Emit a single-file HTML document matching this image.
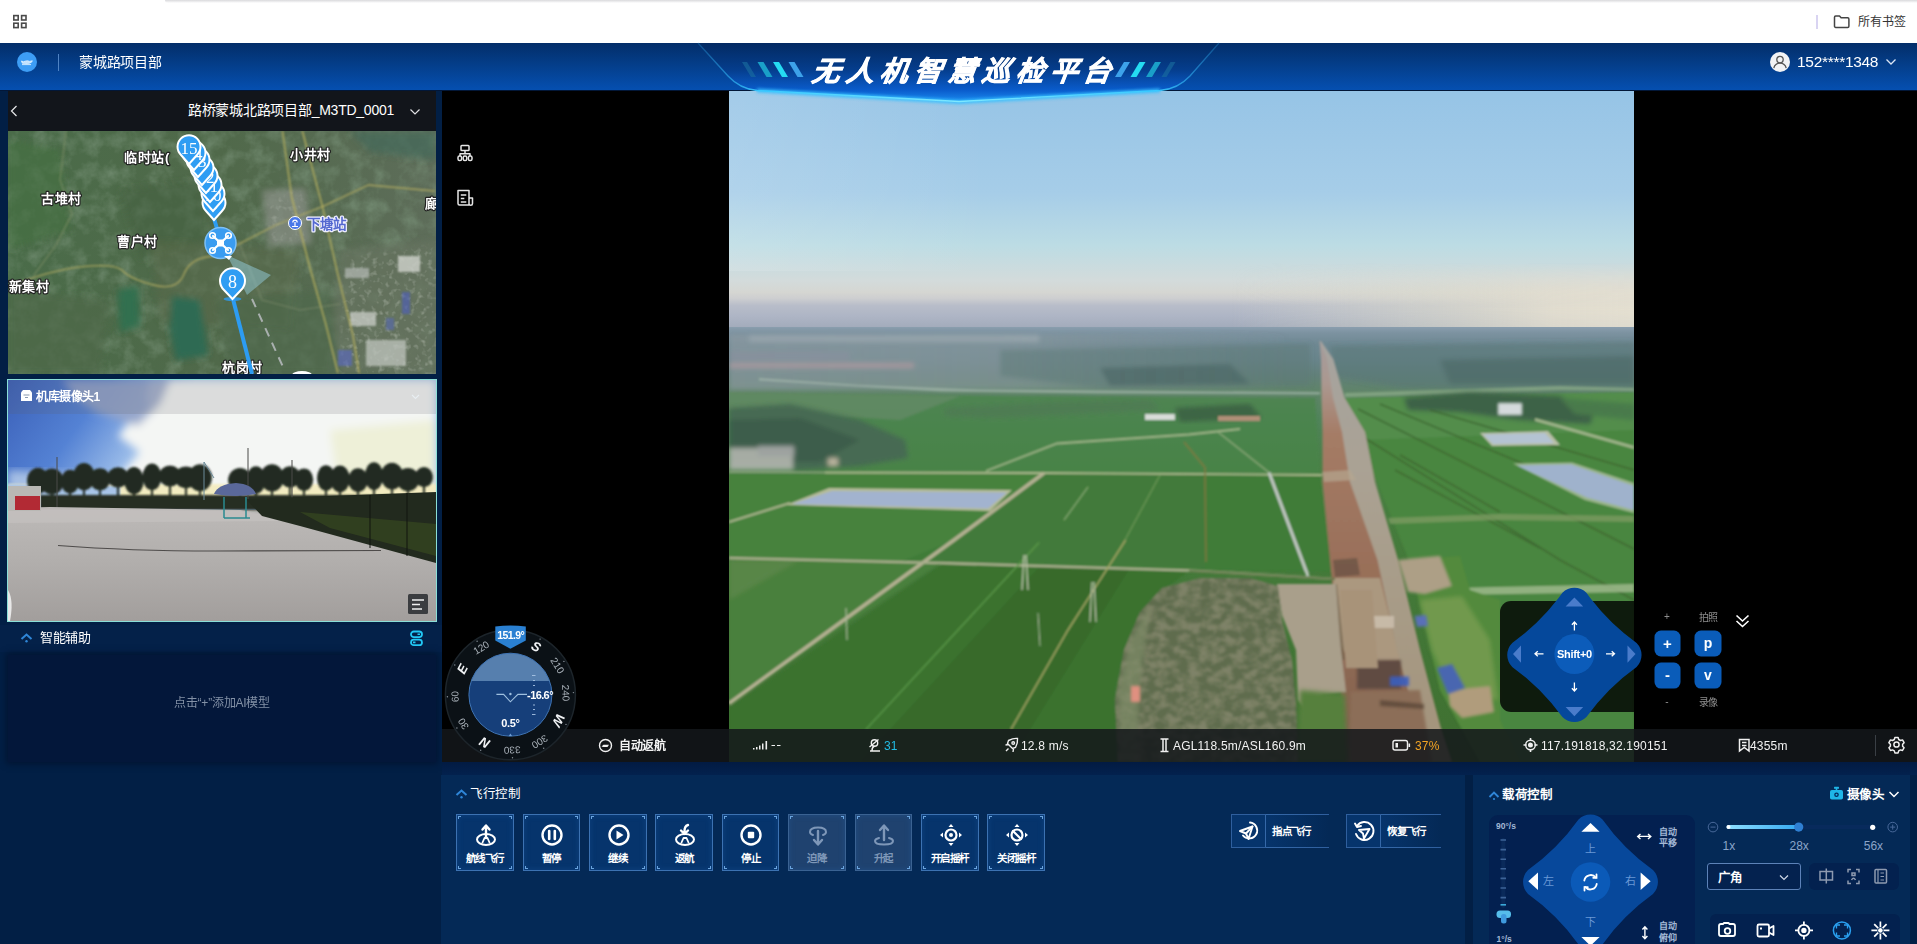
<!DOCTYPE html>
<html lang="zh-CN">
<head>
<meta charset="utf-8">
<title>无人机智慧巡检平台</title>
<style>
*{box-sizing:border-box;margin:0;padding:0}
html,body{width:1917px;height:944px;overflow:hidden;background:#021f45;font-family:"Liberation Sans",sans-serif;color:#fff}
.a{position:absolute}
svg{display:block;position:absolute;overflow:visible}
#bm{position:absolute;left:0;top:0;width:1917px;height:43px;background:#fff}
#hdr{position:absolute;left:0;top:43px;width:1917px;height:48px;background:linear-gradient(#032e69 0%,#043c86 40%,#0550b2 100%)}
#left{position:absolute;left:0;top:91px;width:442px;height:853px;background:#021f45}
#lhead{position:absolute;left:8px;top:0;width:428px;height:40px;background:#12151b}
#map{position:absolute;left:8px;top:40px;width:428px;height:243px;background:#4a6a4c;overflow:hidden}
#cam{position:absolute;left:7px;top:287px;width:430px;height:244px;border:1px solid #4ad6d0;overflow:hidden;background:#aaa}
#ai{position:absolute;left:8px;top:564px;width:428px;height:106px;background:#031634}
#main{position:absolute;left:442px;top:91px;width:1475px;height:671px;background:#000;overflow:hidden}
#photo{position:absolute;left:287px;top:0;width:905px;height:671px;overflow:hidden}
#status{position:absolute;left:0;top:638px;width:1475px;height:33px;background:rgba(22,24,28,.82)}
#fc{position:absolute;left:442px;top:775px;width:1023px;height:169px;background:#042a5d}
#pc{position:absolute;left:1473px;top:775px;width:437px;height:169px;background:#042a5d}
#hdr{z-index:5}
#hdr:after{content:"";position:absolute;left:0;top:47px;width:1917px;height:1px;background:#021738;z-index:-1}
#ttl{left:810px;top:10.5px;font-size:28px;line-height:36px;font-weight:900;font-style:italic;letter-spacing:5.9px;white-space:nowrap;color:#fff;-webkit-text-stroke:.7px #fff;transform:skewX(-8deg);transform-origin:0 100%}
#map{top:40px;height:243px;background:#4d684e}
#cam{left:7px;top:288px;width:430px;height:243px;border:1px solid #8adfd8;background:#b5b2b0}
#aih{position:absolute;left:0;top:534px;width:442px;height:27px;background:#042149}
#ai{top:564px;height:107px;background:#03173a;box-shadow:0 0 6px 2px rgba(2,20,48,.9)}
#status{background:rgba(20,23,27,.86)}
.st{position:absolute;top:9px;letter-spacing:.2px;font-size:12px;line-height:16px;white-space:nowrap;color:#f2f2f2}
#fc,#pc{top:775px;background:#042956;overflow:hidden}
#fc{left:441px;width:1024px}
.fb{position:absolute;top:39px;width:57.500px;height:56.500px;border:1px solid #3c72b2;background:#06346c;color:#fff;box-shadow:inset 0 0 6px rgba(40,110,190,.25)}
.fb span{position:absolute;left:-4px;right:-4px;top:36px;text-align:center;font-size:10.500px;line-height:14px;font-weight:bold;letter-spacing:-.5px;white-space:nowrap}
.fb i{position:absolute;width:3px;height:3px;border:0 solid #6aa4de}
.fb .c1{left:1px;top:1px;border-left-width:1px;border-top-width:1px}
.fb .c2{right:1px;top:1px;border-right-width:1px;border-top-width:1px}
.fb .c3{left:1px;bottom:1px;border-left-width:1px;border-bottom-width:1px}
.fb .c4{right:1px;bottom:1px;border-right-width:1px;border-bottom-width:1px}
.fb.dis{background:#1f426f;color:#7e97b8;border-color:#3a6292}
.pb{position:absolute;top:39px;height:34px;border:1px solid #2f5f9e;border-right:0;background:linear-gradient(90deg,#06346c 0,#06346c 35%,rgba(6,52,108,0) 100%)}
.pb:before{content:"";position:absolute;left:34px;right:0;top:-1px;height:1px;background:linear-gradient(90deg,#3568a8,rgba(53,104,168,0))}
.pb:after{content:"";position:absolute;left:34px;right:0;bottom:-1px;height:1px;background:linear-gradient(90deg,#3568a8,rgba(53,104,168,0))}
.pb b{position:absolute;left:33px;top:0;width:1px;height:32px;background:#3568a8}
.pb span{position:absolute;left:40px;top:9px;font-size:10.500px;line-height:14px;font-weight:bold;letter-spacing:-.4px;white-space:nowrap}

</style>
</head>
<body>
<div id="bm">
<div class="a" style="left:165px;top:0;width:1752px;height:3px;background:linear-gradient(#d9d9dc,#fff);border-radius:0 0 0 8px"></div>
<svg style="left:12px;top:14px" width="16" height="16" viewBox="0 0 16 16" fill="none" stroke="#4a4a4a" stroke-width="1.600"><rect x="1.800" y="1.600" width="4.400" height="4.400"/><rect x="9.600" y="1.600" width="4.400" height="4.400"/><rect x="1.800" y="9.200" width="4.400" height="4.400"/><rect x="9.600" y="9.200" width="4.400" height="4.400"/></svg>
<div class="a" style="left:1816px;top:15px;width:2px;height:14px;background:#d9d4f2"></div>
<svg style="left:1833px;top:14px" width="18" height="16" viewBox="0 0 18 16" fill="none" stroke="#444" stroke-width="1.500" stroke-linejoin="round"><path d="M1.500 3.200 a1.200 1.200 0 0 1 1.200 -1.200 h3.800 l1.600 1.800 h6.600 a1.200 1.200 0 0 1 1.200 1.200 v7.200 a1.200 1.200 0 0 1 -1.200 1.200 h-12 a1.200 1.200 0 0 1 -1.200 -1.200 z"/></svg>
<div class="a" style="left:1858px;top:14px;font-size:12px;line-height:16px;color:#333;white-space:nowrap">所有书签</div>
</div>
<div id="hdr">
<svg style="left:0;top:0" width="1917" height="64" viewBox="0 43 1917 64">
<defs>
<linearGradient id="hc" x1="0" y1="43" x2="0" y2="102" gradientUnits="userSpaceOnUse"><stop offset="0" stop-color="#032a62"/><stop offset=".45" stop-color="#053d8c"/><stop offset=".8" stop-color="#0a5ccc"/><stop offset="1" stop-color="#1c8cf0"/></linearGradient>
<linearGradient id="hl" x1="698" y1="0" x2="1219" y2="0" gradientUnits="userSpaceOnUse"><stop offset="0" stop-color="#2a9be0" stop-opacity=".3"/><stop offset=".12" stop-color="#38c8ff"/><stop offset=".5" stop-color="#7fe8ff"/><stop offset=".88" stop-color="#38c8ff"/><stop offset="1" stop-color="#2a9be0" stop-opacity=".3"/></linearGradient>
<filter id="hg" x="-5%" y="-50%" width="110%" height="200%"><feGaussianBlur stdDeviation="1.6"/></filter>
</defs>
<path d="M698 43 L1219 43 L1190 76 Q1178 89 1160 90.500 L959 102 L757 90.500 Q740 89 728 76Z" fill="url(#hc)"/>
<path d="M757 90.500 L959 102 L1160 90.500" stroke="#35c0ff" stroke-width="4" fill="none" filter="url(#hg)" opacity=".9"/>
<path d="M698 43 L728 76 Q740 89 757 90.500 L959 101.500 L1160 90.500 Q1178 89 1190 76 L1219 43" stroke="url(#hl)" stroke-width="1.300" fill="none"/>
<g>
<path d="M742 62 l5 0 l9 15 l-5 0z" fill="#1a6fa0" opacity=".6"/>
<path d="M757.500 62 l6 0 l9 15 l-6 0z" fill="#1aa0c8"/>
<path d="M773 62 l6 0 l9 15 l-6 0z" fill="#25dcf2"/>
<path d="M788.500 62 l6 0 l9 15 l-6 0z" fill="#3da2ea"/>
<path d="M1124 62 l6 0 l-9 15 l-6 0z" fill="#3da2ea"/>
<path d="M1139.500 62 l6 0 l-9 15 l-6 0z" fill="#25dcf2"/>
<path d="M1155 62 l6 0 l-9 15 l-6 0z" fill="#1aa0c8"/>
<path d="M1170.500 62 l5 0 l-9 15 l-5 0z" fill="#1a6fa0" opacity=".6"/>
</g>
</svg>
<div class="a" id="ttl">无人机智慧巡检平台</div>
<svg style="left:17px;top:9px" width="20" height="20" viewBox="0 0 20 20"><circle cx="10" cy="10" r="10" fill="#3d9df5"/><path d="M4.500 9 l2 .8 l1.600 -.6 q2.400 -.8 4.600 .2 l2.600 -.6 l-.8 1.400 q-1.600 1.200 -4.400 1.200 l-4.800 -.2 z M5 12.600 h9" stroke="#dff0ff" stroke-width=".9" fill="#dff0ff" fill-opacity=".8"/></svg>
<div class="a" style="left:58px;top:11px;width:1px;height:17px;background:#4f83c4"></div>
<div class="a" style="left:79px;top:10px;font-size:14px;line-height:18px;white-space:nowrap;letter-spacing:-.2px">蒙城路项目部</div>
<svg style="left:1769px;top:8px" width="22" height="22" viewBox="0 0 22 22"><circle cx="11" cy="11" r="10" fill="#f2f3f5"/><circle cx="11" cy="8.600" r="3.200" fill="none" stroke="#555" stroke-width="1.300"/><path d="M4.800 17.200 q1.200 -5 6.200 -5 q5 0 6.200 5" fill="none" stroke="#555" stroke-width="1.300"/></svg>
<div class="a" style="left:1797px;top:9px;font-size:15.500px;line-height:20px;white-space:nowrap;letter-spacing:-.3px">152****1348</div>
<svg style="left:1885px;top:15px" width="12" height="8" viewBox="0 0 12 8" fill="none" stroke="#dbe6f5" stroke-width="1.300"><path d="M1.500 1.500 L6 6 L10.500 1.500"/></svg>
</div>

<div id="left">
<div id="lhead">
<svg style="left:2px;top:14px" width="8" height="12" viewBox="0 0 8 12" fill="none" stroke="#e8e8ea" stroke-width="1.200"><path d="M6.500 1 L1.500 6 L6.500 11"/></svg>
<div class="a" style="right:42px;top:10px;font-size:14px;line-height:18px;white-space:nowrap;letter-spacing:-.25px;color:#fff">路桥蒙城北路项目部_M3TD_0001</div>
<svg style="left:401px;top:17px" width="12" height="8" viewBox="0 0 12 8" fill="none" stroke="#e0e0e4" stroke-width="1.200"><path d="M1.500 1.500 L6 6 L10.500 1.500"/></svg>
</div>
<div id="map">
<svg style="left:0;top:0" width="428" height="243" viewBox="8 131 428 243">
<defs>
<filter id="mb"><feGaussianBlur stdDeviation="3"/></filter>
<filter id="mb1"><feGaussianBlur stdDeviation="1"/></filter>
<filter id="mn" x="0" y="0" width="100%" height="100%"><feTurbulence type="fractalNoise" baseFrequency=".06" numOctaves="4" seed="7"/><feColorMatrix type="matrix" values="0 0 0 0 .2  0 0 0 0 .3  0 0 0 0 .2  0 0 0 -1.600 .95"/></filter>
<filter id="mn2" x="0" y="0" width="100%" height="100%"><feTurbulence type="fractalNoise" baseFrequency=".18" numOctaves="2" seed="3"/><feColorMatrix type="matrix" values="0 0 0 0 .75  0 0 0 0 .78  0 0 0 0 .72  0 0 0 -2.400 1.150"/></filter>
<linearGradient id="mg" x1="8" y1="0" x2="436" y2="0" gradientUnits="userSpaceOnUse"><stop offset="0" stop-color="#4a6c49"/><stop offset=".5" stop-color="#50694a"/><stop offset="1" stop-color="#5e6d5a"/></linearGradient>
</defs>
<rect x="8" y="131" width="428" height="243" fill="url(#mg)"/>
<rect x="8" y="131" width="428" height="243" filter="url(#mn)" opacity=".8"/>
<g filter="url(#mb)">
<path d="M8 140 L60 150 L70 230 L8 250Z" fill="#42703f" opacity=".6"/>
<path d="M120 190 L200 180 L210 240 L140 260Z" fill="#45603f" opacity=".6"/><path d="M150 240 L300 250 L290 330 L160 320Z" fill="#5a684a" opacity=".5"/>
<path d="M172 296 L200 300 L208 355 L176 360 L170 330Z" fill="#2d6a52"/>
<path d="M118 290 L138 286 L140 326 L120 332Z" fill="#33704f"/>
<path d="M350 131 L436 131 L436 160 L370 152Z" fill="#44685a" opacity=".7"/>
<path d="M262 190 L306 188 L312 244 L268 246Z" fill="#8a9088" opacity=".7"/>
<path d="M340 250 L436 240 L436 374 L330 374Z" fill="#66735f" opacity=".7"/>
<path d="M8 290 L110 300 L100 374 L8 374Z" fill="#4f6a4a" opacity=".7"/>
<path d="M215 300 L330 290 L340 374 L230 374Z" fill="#4e684c" opacity=".7"/>
</g>
<mask id="mk1"><g filter="url(#mb)"><path d="M346 258 L436 246 L436 374 L340 374Z" fill="#fff"/><path d="M266 194 L304 192 L308 240 L270 242Z" fill="#aaa"/></g></mask>
<g mask="url(#mk1)"><rect x="240" y="170" width="200" height="210" filter="url(#mn2)" opacity=".38"/></g>
<g filter="url(#mb1)">
<rect x="398" y="256" width="22" height="16" fill="#c9cdc6" opacity=".85"/><rect x="350" y="312" width="26" height="14" fill="#c4c8c2" opacity=".8"/><rect x="366" y="340" width="40" height="26" fill="#bfc4bd" opacity=".75"/><rect x="345" y="268" width="24" height="10" fill="#aab0aa" opacity=".8"/><rect x="402" y="292" width="8" height="22" fill="#5060b0" opacity=".7"/><rect x="338" y="350" width="14" height="16" fill="#5a68b8" opacity=".7"/><rect x="386" y="318" width="8" height="12" fill="#5668b4" opacity=".6"/>
</g>
<g fill="none" stroke-linecap="round" filter="url(#mb1)">
<path d="M9 286.600 Q50 270 83 266.600 T123 271 T153.600 285 T184 274 T215 256 L239.600 243.600 L276 225 L322.500 206.700 L368.500 185 L434.600 191" stroke="#b3ac62" stroke-width="1.300" opacity=".9"/>
<path d="M282.600 131.500 L291.800 197.500 L310 268 L325.600 323.400 L337.800 372.600" stroke="#bdb55e" stroke-width="1.300"/>
<path d="M302.500 131.500 L322.500 206.700 L337.800 274.300 L353 335.700 L359 372.600" stroke="#bdb55e" stroke-width="1.300"/>
<path d="M66 131 L60 180 L72 214 L56 245 L34 275" stroke="#8f9a70" stroke-width="1.100" opacity=".7"/>
<path d="M239.600 243.600 L262 300 L300 310 L340 304" stroke="#8f9a78" stroke-width="1" opacity=".6"/>
</g>
<!-- labels -->
<g font-family="Liberation Sans, sans-serif" font-weight="bold" font-size="13" letter-spacing=".7" fill="#fff" stroke="#222" stroke-width="2.400" paint-order="stroke" stroke-linejoin="round">
<text x="124" y="162">临时站(</text>
<text x="290" y="159">小井村</text>
<text x="41" y="203">古堆村</text>
<text x="117" y="246">曹户村</text>
<text x="-5" y="291">塘新集村</text>
<text x="222" y="372">杭岗村</text>
<text x="425" y="208">廊</text>
</g>
<text x="307" y="229" font-family="Liberation Sans, sans-serif" font-weight="bold" font-size="13.500" fill="#5468d0" stroke="#eef" stroke-width="2.600" paint-order="stroke" stroke-linejoin="round">下塘站</text>
<circle cx="295" cy="223" r="6.500" fill="#4a78e8" stroke="#fff" stroke-width="1"/><path d="M292 226.500 h6 M295 226 v-4 M292.800 222.500 a2.200 2.400 0 0 1 4.400 0" stroke="#fff" stroke-width="1.200" fill="none"/>
<!-- route -->
<path d="M252 299 L282.600 366" stroke="#b8bcc0" stroke-width="2" stroke-dasharray="9 7" fill="none" opacity=".85"/>
<path d="M227 255 L271 275 L247 295Z" fill="#9fe0f8" opacity=".42"/>
<path d="M232.500 297 L252 374" stroke="#2d9cf2" stroke-width="4" fill="none"/>
<path d="M189 150 L198 178 L210 205 L218 232" stroke="#2d9cf2" stroke-width="4" fill="none"/>
<!-- stacked pins -->
<g id="pins">
<g transform="translate(214,203)"><path d="M0 17 L-8 8 A11.500 11.500 0 1 1 8 8Z" fill="#2f9df3" stroke="#fff" stroke-width="2"/><text x="0" y="6.500" text-anchor="middle" font-family="Liberation Serif, serif" font-size="17" fill="#fff">9</text></g>
<g transform="translate(213,194)"><path d="M0 17 L-8 8 A11.500 11.500 0 1 1 8 8Z" fill="#2f9df3" stroke="#fff" stroke-width="2"/><text x="0" y="6.500" text-anchor="middle" font-family="Liberation Serif, serif" font-size="17" fill="#fff">10</text></g>
<g transform="translate(210,185)"><path d="M0 17 L-8 8 A11.500 11.500 0 1 1 8 8Z" fill="#2f9df3" stroke="#fff" stroke-width="2"/><text x="0" y="6.500" text-anchor="middle" font-family="Liberation Serif, serif" font-size="17" fill="#fff">11</text></g>
<g transform="translate(206,176)"><path d="M0 17 L-8 8 A11.500 11.500 0 1 1 8 8Z" fill="#2f9df3" stroke="#fff" stroke-width="2"/><text x="0" y="6.500" text-anchor="middle" font-family="Liberation Serif, serif" font-size="17" fill="#fff">12</text></g>
<g transform="translate(202,168)"><path d="M0 17 L-8 8 A11.500 11.500 0 1 1 8 8Z" fill="#2f9df3" stroke="#fff" stroke-width="2"/><text x="0" y="6.500" text-anchor="middle" font-family="Liberation Serif, serif" font-size="17" fill="#fff">7</text></g>
<g transform="translate(198,160)"><path d="M0 17 L-8 8 A11.500 11.500 0 1 1 8 8Z" fill="#2f9df3" stroke="#fff" stroke-width="2"/><text x="0" y="6.500" text-anchor="middle" font-family="Liberation Serif, serif" font-size="17" fill="#fff">13</text></g>
<g transform="translate(194,153)"><path d="M0 17 L-8 8 A11.500 11.500 0 1 1 8 8Z" fill="#2f9df3" stroke="#fff" stroke-width="2"/><text x="0" y="6.500" text-anchor="middle" font-family="Liberation Serif, serif" font-size="17" fill="#fff">14</text></g>
<g transform="translate(189,147)"><path d="M0 17 L-8 8 A11.500 11.500 0 1 1 8 8Z" fill="#2f9df3" stroke="#fff" stroke-width="2"/><text x="0" y="6.500" text-anchor="middle" font-family="Liberation Serif, serif" font-size="17" fill="#fff">15</text></g>
</g>
<!-- drone -->
<circle cx="220.500" cy="243" r="15.500" fill="#3a9cf0" stroke="#7cc0f8" stroke-width="1.500"/>
<g stroke="#fff" stroke-width="2.200" fill="none" stroke-linecap="round"><path d="M213 236 L228 250 M228 236 L213 250"/><circle cx="212.500" cy="235.500" r="2.800" stroke-width="1.600"/><circle cx="228.500" cy="235.500" r="2.800" stroke-width="1.600"/><circle cx="212.500" cy="250.500" r="2.800" stroke-width="1.600"/><circle cx="228.500" cy="250.500" r="2.800" stroke-width="1.600"/></g>
<rect x="217" y="239.500" width="7" height="7" rx="1.500" fill="#fff"/>
<path d="M224 256 L232 256 L229 260Z" fill="#fff"/>
<!-- pin 8 -->
<ellipse cx="232.500" cy="299" rx="9" ry="2" fill="#2d9cf2" opacity=".8"/>
<g transform="translate(232.500,281.500)"><path d="M0 17.500 L-8.500 8.500 A12.500 12.500 0 1 1 8.500 8.500Z" fill="#2f9df3" stroke="#fff" stroke-width="2"/><text x="0" y="6.500" text-anchor="middle" font-family="Liberation Serif, serif" font-size="18" fill="#fff">8</text></g>
<ellipse cx="302" cy="375" rx="10" ry="4" fill="#fff"/>
</svg>

</div>
<div id="cam">
<svg style="left:0;top:0" width="428" height="241" viewBox="8 380 428 241">
<defs>
<linearGradient id="cs" x1="8" y1="380" x2="130" y2="470" gradientUnits="userSpaceOnUse"><stop offset="0" stop-color="#3a5fb8"/><stop offset=".55" stop-color="#5482d4"/><stop offset="1" stop-color="#a4c4ec"/></linearGradient>
<linearGradient id="cg" x1="0" y1="505" x2="0" y2="621" gradientUnits="userSpaceOnUse"><stop offset="0" stop-color="#bdbab8"/><stop offset=".5" stop-color="#b1aeac"/><stop offset="1" stop-color="#a29e9c"/></linearGradient>
<filter id="cb"><feGaussianBlur stdDeviation="4"/></filter>
<filter id="cb1"><feGaussianBlur stdDeviation="1"/></filter>
<filter id="cb2"><feGaussianBlur stdDeviation="8"/></filter>
</defs>
<rect x="8" y="380" width="428" height="130" fill="url(#cs)"/>
<g filter="url(#cb)">
<path d="M150 380 L436 380 L436 500 L110 500 L125 470 L140 452 L118 436 L128 424 L150 410 L146 398Z" fill="#f4f6f4"/>
<path d="M62 380 L170 380 L160 404 L138 426 L96 412 L76 398Z" fill="#98a6c8" opacity=".85"/>
<path d="M330 430 L436 420 L436 500 L340 500Z" fill="#eef0d8"/>
</g>
<path d="M8 470 L120 476 L130 500 L8 500Z" fill="#bcd0ea" filter="url(#cb)" opacity=".8"/>
<rect x="8" y="488" width="428" height="14" fill="#f0e8b8" filter="url(#cb)" opacity=".7"/>
<!-- trees -->
<rect x="8" y="484" width="428" height="16" fill="#f4ecc0" filter="url(#cb1)" opacity=".9"/>
<path d="M8 484 L120 486 L120 500 L8 500Z" fill="#a8c4e8" filter="url(#cb1)"/>
<g fill="#232c22" filter="url(#cb1)">
<ellipse cx="38" cy="480.8" rx="10.9" ry="13.0"/>
<rect x="37" y="480.8" width="2" height="19.2"/>
<ellipse cx="52" cy="481.5" rx="11.8" ry="13.0"/>
<rect x="51" y="481.5" width="2" height="18.5"/>
<ellipse cx="70" cy="481.7" rx="9.1" ry="11.9"/>
<rect x="69" y="481.7" width="2" height="18.3"/>
<ellipse cx="84" cy="476.7" rx="10.9" ry="13.6"/>
<rect x="83" y="476.7" width="2" height="23.3"/>
<ellipse cx="100" cy="479.3" rx="10.4" ry="11.0"/>
<rect x="99" y="479.3" width="2" height="20.7"/>
<ellipse cx="118" cy="477.3" rx="10.7" ry="10.1"/>
<rect x="117" y="477.3" width="2" height="22.7"/>
<ellipse cx="134" cy="480.6" rx="9.8" ry="13.7"/>
<rect x="133" y="480.6" width="2" height="19.4"/>
<ellipse cx="152" cy="476.8" rx="9.5" ry="13.2"/>
<rect x="151" y="476.8" width="2" height="23.2"/>
<ellipse cx="170" cy="476.0" rx="10.9" ry="10.5"/>
<rect x="169" y="476.0" width="2" height="24.0"/>
<ellipse cx="186" cy="477.3" rx="11.6" ry="10.8"/>
<rect x="185" y="477.3" width="2" height="22.7"/>
<ellipse cx="200" cy="477.7" rx="11.9" ry="13.5"/>
<rect x="199" y="477.7" width="2" height="22.3"/>
<ellipse cx="240" cy="480.1" rx="11.9" ry="12.2"/>
<rect x="239" y="480.1" width="2" height="19.9"/>
<ellipse cx="256" cy="480.1" rx="9.6" ry="13.8"/>
<rect x="255" y="480.1" width="2" height="19.9"/>
<ellipse cx="272" cy="477.8" rx="11.9" ry="13.6"/>
<rect x="271" y="477.8" width="2" height="22.2"/>
<ellipse cx="290" cy="476.9" rx="10.1" ry="10.7"/>
<rect x="289" y="476.9" width="2" height="23.1"/>
<ellipse cx="304" cy="479.6" rx="9.2" ry="11.2"/>
<rect x="303" y="479.6" width="2" height="20.4"/>
<ellipse cx="326" cy="478.0" rx="9.0" ry="12.7"/>
<rect x="325" y="478.0" width="2" height="22.0"/>
<ellipse cx="340" cy="478.9" rx="9.9" ry="13.3"/>
<rect x="339" y="478.9" width="2" height="21.1"/>
<ellipse cx="358" cy="480.2" rx="9.9" ry="11.9"/>
<rect x="357" y="480.2" width="2" height="19.8"/>
<ellipse cx="374" cy="476.1" rx="9.2" ry="13.9"/>
<rect x="373" y="476.1" width="2" height="23.9"/>
<ellipse cx="392" cy="476.1" rx="11.2" ry="13.4"/>
<rect x="391" y="476.1" width="2" height="23.9"/>
<ellipse cx="408" cy="479.5" rx="11.4" ry="11.5"/>
<rect x="407" y="479.5" width="2" height="20.5"/>
<ellipse cx="424" cy="477.1" rx="9.0" ry="10.2"/>
<rect x="423" y="477.1" width="2" height="22.9"/>
<rect x="40" y="495" width="396" height="15" fill="#262e22"/>
</g>
<g stroke="#4a4a48" stroke-width="1" fill="none"><path d="M57 457 V510"/><path d="M248 448 V500"/><path d="M292 460 V500"/><path d="M204 462 L214 478 M204 462 V500" stroke="#6a8a98"/></g>
<!-- ground -->
<path d="M8 508 L50 507 L240 510 L436 540 L436 621 L8 621Z" fill="url(#cg)"/>
<path d="M8 509 L240 511 L300 521 L8 523Z" fill="#c4c1bf" opacity=".7"/>
<!-- building & red box -->
<rect x="8" y="486" width="33" height="25" fill="#b9b8b4"/><rect x="15" y="496" width="25" height="14" fill="#b22a34"/>
<!-- fence -->
<path d="M246 499 L436 492 L436 563 L300 526 L262 516 Z" fill="#222a1e"/>
<path d="M300 512 L436 524 L436 556 L330 528Z" fill="#35451f" opacity=".8"/>
<g stroke="#11140f" stroke-width="1"><path d="M370 495 V548 M407 493 V556"/></g>
<!-- umbrella -->
<path d="M214 494 Q218 484 236 483 Q252 484 256 494 Q236 498 214 494Z" fill="#5a689a"/>
<path d="M224 497 V518 M246 497 V518 M224 518 H250" stroke="#2a8a90" stroke-width="1.500" fill="none"/>
<path d="M58 545.500 Q130 551 215 551 T381 550.500" stroke="#3c3a38" stroke-width="1.200" fill="none" opacity=".85"/>
<path d="M8 590 Q14 600 10 621 L8 621Z" fill="#e8e8e8"/>
<!-- title band -->
<rect x="8" y="380" width="428" height="34" fill="#5c5c64" opacity=".17"/>
<rect x="408" y="594" width="20" height="20" rx="1.500" fill="#3b3d40"/>
<path d="M412 600 h12 M412 604.500 h8 M412 609 h10" stroke="#f0f0f0" stroke-width="1.600"/>
<path d="M412 395 l3.500 3.500 l3.500 -3.500" stroke="#e8eef2" stroke-width="1.100" fill="none"/>
<g fill="#fff"><path d="M21 392.500 l2 -2.500 h7 l2 2.500 v8.500 h-11z"/></g>
<path d="M23.500 395 h6 M25 397.500 h3" stroke="#8a9ab0" stroke-width="1.200"/>
</svg>
<div class="a" style="left:28px;top:9px;font-size:12px;line-height:16px;font-weight:bold;white-space:nowrap;letter-spacing:-.5px">机库摄像头1</div>

</div>
<div id="aih">
<svg style="left:20px;top:7px" width="13" height="12" viewBox="0 0 13 12"><path d="M1.500 7 L6.500 2.500 L11.500 7" fill="none" stroke="#2f86d8" stroke-width="2"/><circle cx="6.500" cy="9.300" r="1.200" fill="#2f86d8"/></svg>
<div class="a" style="left:40px;top:4px;font-size:13px;line-height:18px;white-space:nowrap;letter-spacing:-.3px">智能辅助</div>
<svg style="left:409px;top:5px" width="15" height="17" viewBox="0 0 15 17" fill="none" stroke="#22c8f5" stroke-width="1.800"><rect x="2" y="1.500" width="11" height="5.600" rx="2.800"/><rect x="2" y="9.600" width="11" height="5.600" rx="2.800"/><path d="M8.500 4.300 h2.500 M4 12.400 h2.500" stroke-width="1.600"/></svg>
</div>
<div id="ai"><div class="a" style="left:0;top:40px;width:428px;text-align:center;font-size:12px;line-height:16px;color:#8391a6;letter-spacing:-.2px">点击“+”添加AI模型</div></div>
</div>

<div id="main">
<div id="photo">
<svg id="psvg" width="905" height="671" viewBox="729 91 905 671" preserveAspectRatio="none">
<defs>
<linearGradient id="sky" x1="0" y1="91" x2="0" y2="328" gradientUnits="userSpaceOnUse">
<stop offset="0" stop-color="#96c4e6"/><stop offset=".43" stop-color="#a6cde8"/><stop offset=".65" stop-color="#bcdce4"/><stop offset=".8" stop-color="#d3dbdb"/><stop offset=".85" stop-color="#d5d6d2"/><stop offset=".875" stop-color="#cdced0"/><stop offset=".905" stop-color="#b8bdc9"/><stop offset=".95" stop-color="#aeb5c5"/><stop offset="1" stop-color="#a2abbb"/>
</linearGradient>
<linearGradient id="peach" x1="1230" y1="0" x2="1634" y2="0" gradientUnits="userSpaceOnUse">
<stop offset="0" stop-color="#dcdccf" stop-opacity="0"/><stop offset=".5" stop-color="#dedccd" stop-opacity=".6"/><stop offset=".8" stop-color="#e3decf" stop-opacity=".95"/><stop offset="1" stop-color="#e4dfd0" stop-opacity="1"/>
</linearGradient>
<linearGradient id="peachv" x1="0" y1="235" x2="0" y2="328" gradientUnits="userSpaceOnUse">
<stop offset="0" stop-color="#fff" stop-opacity="0"/><stop offset=".3" stop-color="#fff" stop-opacity="0"/><stop offset=".62" stop-color="#fff" stop-opacity=".85"/><stop offset=".8" stop-color="#fff" stop-opacity="1"/><stop offset="1" stop-color="#fff" stop-opacity=".9"/>
</linearGradient>
<mask id="pm"><rect x="729" y="235" width="905" height="93" fill="url(#peachv)"/></mask>
<linearGradient id="land" x1="0" y1="327" x2="0" y2="762" gradientUnits="userSpaceOnUse">
<stop offset="0" stop-color="#8a9eae"/><stop offset=".014" stop-color="#7c92a0"/><stop offset=".04" stop-color="#6e8892"/><stop offset=".076" stop-color="#68848a"/><stop offset=".11" stop-color="#62807a"/><stop offset=".15" stop-color="#5f8468"/><stop offset=".214" stop-color="#50845a"/><stop offset=".333" stop-color="#487f43"/><stop offset=".536" stop-color="#447a3a"/><stop offset="1" stop-color="#3f7030"/>
</linearGradient>
<linearGradient id="road" x1="0" y1="341" x2="0" y2="762" gradientUnits="userSpaceOnUse">
<stop offset="0" stop-color="#a49c9c"/><stop offset=".1" stop-color="#ab9890"/><stop offset=".22" stop-color="#a57c66"/><stop offset=".52" stop-color="#9a705a"/><stop offset="1" stop-color="#80604c"/>
</linearGradient>
<linearGradient id="conc" x1="0" y1="341" x2="0" y2="762" gradientUnits="userSpaceOnUse">
<stop offset="0" stop-color="#a6a4a0"/><stop offset=".3" stop-color="#aaa294"/><stop offset=".6" stop-color="#a89c88"/><stop offset="1" stop-color="#a3937a"/>
</linearGradient>
<linearGradient id="dg" x1="729" y1="0" x2="1289" y2="0" gradientUnits="userSpaceOnUse"><stop offset="0" stop-color="#909ca4"/><stop offset=".5" stop-color="#8c9aa0" stop-opacity=".9"/><stop offset="1" stop-color="#8a98a0" stop-opacity="0"/></linearGradient>
<linearGradient id="skl" x1="729" y1="0" x2="989" y2="0" gradientUnits="userSpaceOnUse"><stop offset="0" stop-color="#fff" stop-opacity=".13"/><stop offset="1" stop-color="#fff" stop-opacity="0"/></linearGradient>
<filter id="b1"><feGaussianBlur stdDeviation="0.8"/></filter>
<filter id="b2"><feGaussianBlur stdDeviation="2.2"/></filter>
<filter id="b4"><feGaussianBlur stdDeviation="5"/></filter>
<filter id="b8"><feGaussianBlur stdDeviation="9"/></filter>
<filter id="nz" x="0" y="0" width="100%" height="100%" color-interpolation-filters="sRGB"><feTurbulence type="fractalNoise" baseFrequency=".09 .13" numOctaves="3" seed="4" result="t"/><feColorMatrix in="t" type="matrix" values="0 0 0 0 .62  0 0 0 0 .6  0 0 0 0 .5  0 0 0 -3 1.9" result="c"/><feComposite in="c" in2="SourceGraphic" operator="in"/></filter>
</defs>
<rect x="729" y="91" width="905" height="237" fill="url(#sky)"/>
<rect x="729" y="235" width="905" height="93" fill="url(#peach)" mask="url(#pm)"/>
<rect x="729" y="91" width="260" height="180" fill="url(#skl)"/>
<rect x="729" y="327" width="905" height="435" fill="url(#land)"/>
<g filter="url(#b1)">
<!-- distant haze features -->
<g filter="url(#b2)">
<rect x="749" y="335" width="290" height="7" fill="#b0bcc4" opacity=".7"/>
<rect x="729" y="334" width="560" height="56" fill="url(#dg)" opacity=".62"/>
<rect x="729" y="363" width="185" height="5" fill="#b09aa0" opacity=".8"/>
<rect x="729" y="352" width="120" height="8" fill="#8d8fa0" opacity=".5"/>
<path d="M1000 350 L1310 344 L1310 386 L1100 388 L1000 376Z" fill="#5d7a78" opacity=".5"/>
<path d="M1330 346 L1634 342 L1634 392 L1400 388 L1335 376Z" fill="#5a7676" opacity=".55"/>
<path d="M1100 368 L1230 364 L1250 384 L1110 386Z" fill="#4a6464" opacity=".6"/>
<path d="M1440 360 L1634 356 L1634 384 L1450 384Z" fill="#4c6866" opacity=".6"/>
</g>
<!-- river/light strip -->
<path d="M759 378 L860 385 L980 389.500 L1110 390.500 L1320 392 L1320 394.500 L1100 393.500 L940 391.500 L759 380.500Z" fill="#a4b6ac" opacity=".7"/>
<path d="M1345 393 L1560 386 L1634 388 L1634 391 L1560 390 L1345 397Z" fill="#8fae8a" opacity=".7"/>
<!-- upper-left meadow lighter -->
<path d="M729 392 L1000 396 L1315 398 L1320 473 L729 473Z" fill="#4a844a" opacity=".7"/>
<path d="M729 392 L960 396 L900 420 L729 410Z" fill="#668c68" opacity=".7"/>
<!-- tree cluster left -->
<g filter="url(#b2)">
<path d="M729 408 L790 404 L860 420 L905 440 L908 458 L860 466 L800 470 L729 470Z" fill="#476a52"/>
<path d="M729 420 L800 418 L860 440 L820 462 L729 462Z" fill="#3e5d4c"/>
<path d="M945 408 L1060 402 L1150 400 L1160 410 L1000 418 L945 416Z" fill="#4f7a54" opacity=".8"/>
<rect x="729" y="448" width="64" height="22" fill="#b8bab4" opacity=".85"/>
<rect x="758" y="446" width="36" height="10" fill="#9ea3a0"/>
<rect x="828" y="458" width="10" height="8" fill="#b9b39e"/>
</g>
<!-- buildings mid -->
<rect x="1145" y="414" width="30" height="6" fill="#d8dcd8"/>
<path d="M1175 408 L1250 404 L1262 418 L1180 422Z" fill="#3c6545" filter="url(#b2)"/>
<rect x="1218" y="416" width="42" height="5" fill="#b08f78"/>
<!-- darker field rows -->
<path d="M950 474 L1320 476 L1332 572 L1189 570 L905 563Z" fill="#3f7c38"/>
<path d="M1044 474 L1205 475 L1205 568 L930 562Z" fill="#427a3c" opacity=".9"/>
<path d="M729 474 L1040 474 L952 541 L900 562 L729 558Z" fill="#47823e"/>
<!-- lower left field -->
<path d="M729 560 L940 563 L729 702Z" fill="#4a803d"/>
<path d="M729 560 L800 560 L729 600Z" fill="#648a50" opacity=".6" filter="url(#b2)"/>
<!-- lower centre darker -->
<path d="M942 564 L1189 571 L1150 600 L1120 680 L1118 762 L729 762 L729 708Z" fill="#3a722f"/>
<path d="M1040 566 L1130 568 L1010 762 L860 762Z" fill="#37692b" opacity=".8"/>
<!-- pond left -->
<path d="M786 505 L829 488 L1012 490 L990 511Z" fill="#b5bc98"/>
<path d="M792 504 L832 491 L1007 492.500 L988 508.500Z" fill="#a2b3cf"/>
<!-- paths -->
<path d="M825 472.500 L1044 473 L1322 475" stroke="#a9b78c" stroke-width="1.800" fill="none"/>
<path d="M729 472 L825 472.500" stroke="#9fae8c" stroke-width="1.500" fill="none" opacity=".8"/>
<path d="M986 471 L1057 443.500 L1189 434.500 L1240 429" stroke="#9fb488" stroke-width="1.800" fill="none"/>
<path d="M1218 432 L1269 472.500" stroke="#8aa878" stroke-width="1.500" fill="none"/>
<path d="M1184 442 L1205 467.500 L1206 562" stroke="#86783f" stroke-width="1.600" fill="none" opacity=".85"/>
<path d="M1044 473 L952.700 541 L729 703.500" stroke="#b3b092" stroke-width="3.600" fill="none"/>
<path d="M790 503 L729 522" stroke="#a9b38c" stroke-width="2" fill="none"/>
<path d="M729 558 L940 563 L1189 570.500 L1335 579" stroke="#a7ad8c" stroke-width="2.600" fill="none"/>
<path d="M1269 472.500 L1302 560 L1308 576" stroke="#bfc6c0" stroke-width="3.200" fill="none"/>
<path d="M1088 487 L1064 520" stroke="#8fb07a" stroke-width="1.200" fill="none"/>
<path d="M1039 542.500 L866 729.400" stroke="#5d9a4a" stroke-width="1.300" fill="none"/>
<path d="M1125.600 540 L1068 630 L1011 729.400" stroke="#a2a565" stroke-width="1.500" fill="none"/>
<path d="M1160 475 L1125 540" stroke="#6f9a58" stroke-width="1.200" fill="none"/>
<!-- pylons -->
<path d="M1024 555 L1022 590 M1026 555 L1028 590" stroke="#b9c2a8" stroke-width="1.400" fill="none"/>
<path d="M1092 582 L1090 622 M1094 582 L1096 622" stroke="#b9c2a8" stroke-width="1.300" fill="none"/>
<path d="M846 608 L847 640" stroke="#a8b898" stroke-width="1.200" fill="none"/>
<path d="M1038 613 L1040 646" stroke="#a8b898" stroke-width="1" fill="none"/>
<!-- right fields -->
<path d="M1345 398 L1634 392 L1634 762 L1480 762 L1409 560 L1373 472Z" fill="#4a863f"/>
<path d="M1345 398 L1634 392 L1634 430 L1360 440Z" fill="#558e50" opacity=".8"/>
<g filter="url(#b2)">
<path d="M1404 398 L1470 392 L1560 396 L1595 410 L1590 424 L1520 420 L1460 412 L1408 410Z" fill="#3c6246"/>
<path d="M1560 398 L1634 404 L1634 420 L1575 414Z" fill="#4a7a4c"/>
</g>
<rect x="1498" y="403" width="24" height="12" fill="#d5dadc" filter="url(#b1)"/>
<path d="M1535 418 L1634 446 L1634 449 L1535 421Z" fill="#9fb48a"/>
<g stroke="#3c622e" stroke-width="1.600" fill="none" opacity=".8">
<path d="M1358 409 L1634 549"/><path d="M1380 404 L1634 510"/><path d="M1352 430 L1560 560 L1634 600"/><path d="M1395 470 L1540 548"/><path d="M1430 410 L1634 470"/><path d="M1400 455 L1500 512"/>
</g>
<path d="M1388 518 L1500 514 L1634 516 L1634 522 L1500 520 L1390 524Z" fill="#7a9a62" opacity=".8"/>
<path d="M1455 588 L1634 584 L1634 592 L1457 595Z" fill="#9db88c" opacity=".85"/>
<!-- right ponds -->
<path d="M1480 433 L1548 431 L1560 445 L1492 446Z" fill="#b8bfa6"/>
<path d="M1483 434.500 L1545 433 L1554 443 L1493 444Z" fill="#b4c3d2"/>
<path d="M1513 463.500 L1572 462.500 L1634 483 L1634 513 L1585 500Z" fill="#9ab58a"/>
<path d="M1517 465.500 L1571 464.500 L1634 486 L1634 510 L1587 497.500Z" fill="#9fb2cc"/>
<!-- right of road bottom: mixed -->
<path d="M1409 560 L1460 556 L1470 590 L1500 600 L1500 720 L1520 762 L1480 762 L1440 690Z" fill="#528a3c"/><path d="M1420 600 L1462 596 L1490 640 L1498 700 L1450 690 L1432 650Z" fill="#7fa055" opacity=".7" filter="url(#b2)"/>

<path d="M1448 690 L1490 686 L1494 712 L1462 718 L1450 706Z" fill="#b09c7c" filter="url(#b1)"/>
<path d="M1437 668 L1452 664 L1465 688 L1448 694Z" fill="#4a66b0" filter="url(#b1)"/>
<path d="M1414.500 616 L1426 615 L1428 626 L1417 627Z" fill="#5a70b8" filter="url(#b1)"/>
<!-- road -->
<path d="M1319.500 341 L1320.800 341 L1333 359 L1344.600 398 L1365 432 L1375 482 L1398 560 L1420 650 L1440.500 727 L1452 762 L1345 762 L1338 650 L1330 560 L1322.500 482 L1322.500 432 L1321.500 398 L1321 360Z" fill="url(#road)"/>
<path d="M1333 578 L1380 578 L1400 660 L1350 662 L1338 640Z" fill="#ab987f"/>
<path d="M1334 584 L1337 584 L1345 660 L1341 660Z" fill="#6f6048" opacity=".7"/>
<path d="M1320 341 L1320.800 341 L1333 359 L1344.600 398 L1365 432 L1375 482 L1398 560 L1420 650 L1440.500 727 L1452 762 L1428 762 L1418 727 L1397 650 L1377.500 560 L1350 482 L1342 432 L1333 398 L1327 359Z" fill="url(#conc)"/>
<path d="M1398 560 L1440 556 L1452 586 L1425 594 L1408 592Z" fill="#ad9f86" filter="url(#b1)"/>
<path d="M1322 472 L1350 470 L1356 480 L1324 482Z" fill="#b5a690" opacity=".7"/>
<path d="M1333 560 L1357 558 L1360 575 L1335 577Z" fill="#6d5648" opacity=".85"/>
<rect x="1357" y="660" width="44" height="29" fill="#5c4a42" opacity=".9" filter="url(#b1)"/>
<path d="M1351 692 L1420 690 L1432 762 L1348 762Z" fill="#8c6e58" filter="url(#b1)"/>
<path d="M1380 700 L1424 704 L1424 709 L1380 706Z" fill="#5a4638" opacity=".8" filter="url(#b1)"/>
<rect x="1374" y="616" width="20" height="12" fill="#cbbfae" opacity=".85"/>
<rect x="1390" y="676.500" width="19" height="9.500" fill="#3a5fc0" opacity=".9" filter="url(#b1)"/>
<!-- sand area -->
<path d="M1277 584 L1336 584 L1340 640 L1346 692 L1322 694 L1310 720 L1298 700 L1296 650 L1282 615Z" fill="#a99f8b"/>
<path d="M1340 590 L1372 590 L1378 668 L1346 668Z" fill="#a89379"/>
<path d="M1300 690 L1345 694 L1348 762 L1296 762Z" fill="#56803c" filter="url(#b2)"/>
<!-- scrub patch -->
<path d="M1118 762 L1115 700 L1124 650 L1140 612 L1162 588 L1200 578 L1250 578 L1278 586 L1282 620 L1292 660 L1296 700 L1298 762Z" fill="#5f6c4e"/>
<path d="M1118 762 L1115 700 L1124 650 L1140 612 L1162 588 L1200 578 L1250 578 L1278 586 L1282 620 L1292 660 L1296 700 L1298 762Z" fill="#8a927a" filter="url(#nz)" opacity=".5"/>
<path d="M1120 740 L1118 690 L1130 640 L1150 605 L1140 680 L1136 762 L1120 762Z" fill="#7e8c68" opacity=".7" filter="url(#b2)"/>
<rect x="1131" y="686" width="9" height="16" fill="#e09080" filter="url(#b1)"/>
<path d="M1189 571 L1335 579" stroke="#55703f" stroke-width="2.500" fill="none" opacity=".7"/>
</g>

</svg>

</div>
<svg style="left:0;top:0" width="1475" height="671" viewBox="442 91 1475 671">
<g fill="none" stroke="#e6e6e6" stroke-width="1.500" stroke-linejoin="round">
<rect x="461" y="145.500" width="8" height="5" rx=".8"/><path d="M465 150.500 v2.500 M460 156 v-2.200 h10 v2.200"/><rect x="458" y="156" width="3.600" height="4.500" rx="1.600"/><rect x="463.200" y="156" width="3.600" height="4.500" rx="1.600"/><rect x="468.400" y="156" width="3.600" height="4.500" rx="1.600"/>
<path d="M458 190.500 h11 v14.500 h-9.500 a1.500 1.500 0 0 1 -1.500 -1.500z M469 198 h3.500 v5.500 a1.500 1.500 0 0 1 -3.500 0"/><path d="M460.800 195 h5.500 M460.800 198.500 h3.500 M460.800 202 h5.500" stroke-width="1.300"/>
</g>
</svg>
<div id="status">
<svg style="left:0;top:0" width="1475" height="33" viewBox="442 729 1475 33" fill="none" stroke="#f0f0f0" stroke-width="1.400">
<circle cx="605.500" cy="745.500" r="6"/><path d="M601.500 746.500 l2 -1.800 h5.500 l-1.500 2.200 h-4z" fill="#f0f0f0" stroke="none"/>
<g fill="#f0f0f0" stroke="none"><rect x="753" y="748" width="1.500" height="1.500"/><rect x="756" y="747" width="1.500" height="2.500"/><rect x="759" y="745.500" width="1.500" height="4"/><rect x="762" y="743.500" width="1.500" height="6"/><rect x="765.500" y="741" width="1.600" height="8.500"/></g>
<path d="M771.500 745.500 h3.500 M777 745.500 h3.500" stroke-width="1.200"/>
<g><circle cx="874.500" cy="743" r="3.200"/><path d="M870 751 h10 M869.500 747 l9 -7.500 M872 750.500 q0 -3.500 2.500 -4.500"/></g>
<g><path d="M1006 751 l2.500 -2.500 M1008.500 740.500 q5 -2.500 9 -2 q.5 4 -2 9 l-3 1 l-5 -5z M1005.500 745 l3 -.5 M1013 752 l.5 -3"/><circle cx="1013.200" cy="743" r="1.300"/></g>
<g><path d="M1160.500 739 h8 M1160.500 751.500 h8 M1163 739.500 v11.500 M1166 739.500 v11.500" stroke-width="1.500"/></g>
<g><rect x="1393" y="740.500" width="14.500" height="9.500" rx="2"/><path d="M1409.300 743.500 v3.500" stroke-width="1.600"/><rect x="1395.500" y="743" width="2.500" height="4.500" fill="#f0f0f0" stroke="none"/></g>
<g><circle cx="1530.500" cy="745" r="4.800"/><circle cx="1530.500" cy="745" r="1.800" fill="#f0f0f0"/><path d="M1530.500 738 v3 M1530.500 749 v3 M1523.500 745 h3 M1534.500 745 h3" stroke-width="1.600"/></g>
<g><path d="M1739.500 739.500 h9.500 v11.500 l-4.750 -3.500 l-4.750 3.500z M1742 742.500 h4.500 M1742 745.500 h4.500" stroke-width="1.500"/></g>
<path d="M1875.500 735 v21" stroke="#3a3f45" stroke-width="1"/>
<g transform="translate(1896.500,744.500)"><circle r="2.600" stroke-width="1.500"/><path d="M-1.600 -7 h3.200 l.6 2 l1.800 1 l2 -.6 l1.600 2.800 l-1.500 1.500 v2 l1.500 1.500 l-1.600 2.800 l-2 -.6 l-1.800 1 l-.6 2 h-3.200 l-.6 -2 l-1.800 -1 l-2 .6 l-1.600 -2.800 l1.500 -1.500 v-2 l-1.500 -1.500 l1.600 -2.800 l2 .6 l1.800 -1z" stroke-width="1.500" stroke-linejoin="round"/></g>
</svg>
<div class="st" style="left:177px;font-weight:bold;letter-spacing:-.4px">自动返航</div>
<div class="st" style="left:442px;color:#22bbe4">31</div>
<div class="st" style="left:579px">12.8 m/s</div>
<div class="st" style="left:731px">AGL118.5m/ASL160.9m</div>
<div class="st" style="left:973px;color:#f2a324">37%</div>
<div class="st" style="left:1099px">117.191818,32.190151</div>
<div class="st" style="left:1308px">4355m</div>

</div>
<svg style="left:0;top:0" width="1475" height="671" viewBox="442 91 1475 671">
<!-- compass -->
<circle cx="510.400" cy="694.700" r="65" fill="#0b1116" stroke="#1d252b" stroke-width="1.500"/>
<g font-family="Liberation Sans, sans-serif">
<text transform="translate(536.1,646.6) rotate(28.1)" text-anchor="middle" y="4.5" font-size="13" font-weight="bold" font-style="italic" fill="#f2f4f6">S</text>
<circle cx="540.1" cy="639.1" r=".7" fill="#8a939b"/>
<text transform="translate(557.5,665.4) rotate(58.1)" text-anchor="middle" y="3.6" font-size="10" fill="#aab2ba">210</text>
<circle cx="563.9" cy="661.4" r=".7" fill="#8a939b"/>
<text transform="translate(565.9,692.9) rotate(88.1)" text-anchor="middle" y="3.6" font-size="10" fill="#aab2ba">240</text>
<circle cx="573.4" cy="692.6" r=".7" fill="#8a939b"/>
<text transform="translate(558.5,720.4) rotate(118.1)" text-anchor="middle" y="4.5" font-size="13" font-weight="bold" font-style="italic" fill="#f2f4f6">W</text>
<circle cx="566.0" cy="724.4" r=".7" fill="#8a939b"/>
<text transform="translate(539.7,741.8) rotate(148.1)" text-anchor="middle" y="3.6" font-size="10" fill="#aab2ba">300</text>
<circle cx="543.7" cy="748.2" r=".7" fill="#8a939b"/>
<text transform="translate(512.2,750.2) rotate(178.1)" text-anchor="middle" y="3.6" font-size="10" fill="#aab2ba">330</text>
<circle cx="512.5" cy="757.7" r=".7" fill="#8a939b"/>
<text transform="translate(484.7,742.8) rotate(-151.9)" text-anchor="middle" y="4.5" font-size="13" font-weight="bold" font-style="italic" fill="#f2f4f6">N</text>
<circle cx="480.7" cy="750.3" r=".7" fill="#8a939b"/>
<text transform="translate(463.3,724.0) rotate(-121.9)" text-anchor="middle" y="3.6" font-size="10" fill="#aab2ba">30</text>
<circle cx="456.9" cy="728.0" r=".7" fill="#8a939b"/>
<text transform="translate(454.9,696.5) rotate(-91.9)" text-anchor="middle" y="3.6" font-size="10" fill="#aab2ba">60</text>
<circle cx="447.4" cy="696.8" r=".7" fill="#8a939b"/>
<text transform="translate(462.3,669.0) rotate(-61.9)" text-anchor="middle" y="4.5" font-size="13" font-weight="bold" font-style="italic" fill="#f2f4f6">E</text>
<circle cx="454.8" cy="665.0" r=".7" fill="#8a939b"/>
<text transform="translate(481.1,647.6) rotate(-31.9)" text-anchor="middle" y="3.6" font-size="10" fill="#aab2ba">120</text>
<circle cx="477.1" cy="641.2" r=".7" fill="#8a939b"/>
</g>
<defs><clipPath id="cc"><circle cx="510.400" cy="694.700" r="41.500"/></clipPath></defs>
<g clip-path="url(#cc)"><rect x="465" y="650" width="92" height="31" fill="#567fae"/><rect x="465" y="681" width="92" height="60" fill="#163f7a"/></g>
<circle cx="510.400" cy="694.700" r="41.500" fill="none" stroke="#3f74b4" stroke-width="1"/>
<path d="M496.400 694.400 H503.600 L510.400 701.800 L517.900 694.400 H527" stroke="#9fc0e0" stroke-width="1.100" fill="none"/><circle cx="510.400" cy="694" r="1.200" fill="#9fc0e0"/>
<path d="M532 675.500 h3.500 M533 680.500 h2 M533 685.500 h2 M533 705 h2 M533 709.500 h2 M532 714.500 h3.500" stroke="#a8c4e4" stroke-width=".9"/>
<path d="M508.800 736 L510.400 733.500 L512 736Z" fill="#6fa0d8"/>
<path d="M495.300 626.400 Q510.400 624.500 525.800 626.400 V640.500 L510.400 648.800 L495.300 640.500Z" fill="#2a80d2"/>
<g font-family="Liberation Sans, sans-serif" font-weight="bold" fill="#fff" text-anchor="middle">
<text x="510.600" y="638.800" font-size="10.500" letter-spacing="-.6">151.9°</text>
<text x="540" y="698.500" font-size="11" letter-spacing="-.6">-16.6°</text>
<text x="510.400" y="727" font-size="11" letter-spacing="-.4">0.5°</text>
</g>
</svg>
<div class="a" style="left:1058px;top:510px;width:300px;height:111px;border-radius:11px;background:rgba(0,0,0,.8)"></div>
<svg style="left:0;top:0" width="1475" height="671" viewBox="442 91 1475 671">
<path d="M1562.4 592.7 A17 17 0 0 1 1586.4 592.7 Q1607.3 622.0 1636.6 642.9 A17 17 0 0 1 1636.6 666.9 Q1607.3 687.8 1586.4 717.1 A17 17 0 0 1 1562.4 717.1 Q1541.5 687.8 1512.2 666.9 A17 17 0 0 1 1512.2 642.9 Q1541.5 622.0 1562.4 592.7Z" fill="#05489b"/>
<circle cx="1574.400" cy="654.100" r="20" fill="#0c5cba"/>
<g fill="#4a7ccb"><path d="M1565.600 606.500 L1574.400 597.400 L1583.200 606.500Z"/><path d="M1565.600 707 L1574.400 716.200 L1583.200 707Z"/><path d="M1521 645.500 L1513 654.100 L1521 662.700Z"/><path d="M1627.500 645.500 L1635.500 654.100 L1627.500 662.700Z"/></g>
<g stroke="#fff" stroke-width="1.300" fill="none"><path d="M1574.400 630.500 v-8.500 m-2.500 2.800 l2.500 -2.800 l2.500 2.800"/><path d="M1574.400 682.500 v8.500 m-2.500 -2.800 l2.500 2.800 l2.500 -2.800"/><path d="M1543.500 653.800 h-8.500 m2.800 -2.500 l-2.800 2.500 l2.800 2.500"/><path d="M1606 653.800 h8.500 m-2.800 -2.500 l2.800 2.500 l-2.800 2.500"/></g>
<text x="1574.400" y="658" text-anchor="middle" font-family="Liberation Sans, sans-serif" font-weight="bold" font-size="11" fill="#fff" letter-spacing="-.3">Shift+0</text>
<g fill="#0a5cb9"><rect x="1654.500" y="630.500" width="26" height="26" rx="6.500"/><rect x="1694.500" y="630.500" width="27" height="26" rx="6.500"/><rect x="1654.500" y="662.600" width="26" height="26" rx="6.500"/><rect x="1694.500" y="662.600" width="27" height="26" rx="6.500"/></g>
<g font-family="Liberation Sans, sans-serif" font-weight="bold" fill="#fff" text-anchor="middle" font-size="14"><text x="1667.500" y="648.500" font-size="15">+</text><text x="1708" y="647.500">p</text><text x="1667.500" y="679.500" font-size="15">-</text><text x="1708" y="680">v</text></g>
<g font-family="Liberation Sans, sans-serif" fill="#8f8f8f" text-anchor="middle" font-size="10"><text x="1667" y="620">+</text><text x="1708" y="620.500" letter-spacing="-.5">拍照</text><text x="1667" y="705">-</text><text x="1708" y="705.500" letter-spacing="-.5">录像</text></g>
<path d="M1736.500 615.500 l6 5.500 l6 -5.500 M1736.500 621 l6 5.500 l6 -5.500" stroke="#fff" stroke-width="1.600" fill="none"/>
</svg>


</div>
<div class="a" style="left:442px;top:762px;width:1475px;height:13px;background:linear-gradient(#021b42,#03214e)"></div>
<div id="fc">
<svg style="left:14px;top:13px" width="13" height="12" viewBox="0 0 13 12"><path d="M1.500 7 L6.500 2.500 L11.500 7" fill="none" stroke="#2f86d8" stroke-width="2"/><circle cx="6.500" cy="9.300" r="1.200" fill="#2f86d8"/></svg>
<div class="a" style="left:29px;top:10px;font-size:12.500px;line-height:18px;white-space:nowrap;letter-spacing:-.4px">飞行控制</div>
<div class="fb" style="left:15.2px"><i class="c1"></i><i class="c2"></i><i class="c3"></i><i class="c4"></i><svg style="left:16.500px;top:7px" width="24" height="26" viewBox="-12 -13 24 26" fill="none" stroke="currentColor" stroke-width="2" stroke-linecap="round" stroke-linejoin="round"><ellipse cx="0" cy="4.500" rx="9" ry="5.500"/><path d="M0 3 V-9 M-3.500 -5.500 L0 -9.500 L3.500 -5.500" stroke-width="2.400"/><path d="M-3.500 7.500 L-1.500 3 H1.500 L3.500 7.500" stroke-width="1.800"/></svg><span>航线飞行</span></div>
<div class="fb" style="left:81.6px"><i class="c1"></i><i class="c2"></i><i class="c3"></i><i class="c4"></i><svg style="left:16.500px;top:7px" width="24" height="26" viewBox="-12 -13 24 26" fill="none" stroke="currentColor" stroke-width="2" stroke-linecap="round" stroke-linejoin="round"><circle r="9.500" stroke-width="2.400"/><path d="M-2.800 -4 V4 M2.800 -4 V4" stroke-width="2.600"/></svg><span>暂停</span></div>
<div class="fb" style="left:148.0px"><i class="c1"></i><i class="c2"></i><i class="c3"></i><i class="c4"></i><svg style="left:16.500px;top:7px" width="24" height="26" viewBox="-12 -13 24 26" fill="none" stroke="currentColor" stroke-width="2" stroke-linecap="round" stroke-linejoin="round"><circle r="9.500" stroke-width="2.400"/><path d="M-2.500 -4.500 L4.500 0 L-2.500 4.500Z" fill="currentColor" stroke="none"/></svg><span>继续</span></div>
<div class="fb" style="left:214.4px"><i class="c1"></i><i class="c2"></i><i class="c3"></i><i class="c4"></i><svg style="left:16.500px;top:7px" width="24" height="26" viewBox="-12 -13 24 26" fill="none" stroke="currentColor" stroke-width="2" stroke-linecap="round" stroke-linejoin="round"><ellipse cx="0" cy="4.500" rx="9" ry="5.500"/><path d="M3 -10 Q-1 -9 -.5 -2 M-4 -4.500 L-.500 -1 L3 -4.500" stroke-width="2.400"/><path d="M-3.500 7.500 L-1.500 3 H1.500 L3.500 7.500" stroke-width="1.800"/></svg><span>返航</span></div>
<div class="fb" style="left:280.8px"><i class="c1"></i><i class="c2"></i><i class="c3"></i><i class="c4"></i><svg style="left:16.500px;top:7px" width="24" height="26" viewBox="-12 -13 24 26" fill="none" stroke="currentColor" stroke-width="2" stroke-linecap="round" stroke-linejoin="round"><circle r="9.500" stroke-width="2.400"/><rect x="-3.200" y="-3.200" width="6.400" height="6.400" rx="1" fill="currentColor" stroke="none"/></svg><span>停止</span></div>
<div class="fb dis" style="left:347.2px"><i class="c1"></i><i class="c2"></i><i class="c3"></i><i class="c4"></i><svg style="left:16.500px;top:7px" width="24" height="26" viewBox="-12 -13 24 26" fill="none" stroke="currentColor" stroke-width="2" stroke-linecap="round" stroke-linejoin="round"><path d="M-8 -3 Q-8 -7.500 0 -7.500 Q8 -7.500 8 -3 Q8 -1 5 0 M-5 0 Q-8 -1 -8 -3" stroke-width="2"/><path d="M0 -4 V9 M-4 5 L0 9.500 L4 5" stroke-width="2.400"/></svg><span>迫降</span></div>
<div class="fb dis" style="left:413.6px"><i class="c1"></i><i class="c2"></i><i class="c3"></i><i class="c4"></i><svg style="left:16.500px;top:7px" width="24" height="26" viewBox="-12 -13 24 26" fill="none" stroke="currentColor" stroke-width="2" stroke-linecap="round" stroke-linejoin="round"><path d="M-5 3 Q-9 4 -9 6 Q-9 9.500 0 9.500 Q9 9.500 9 6 Q9 4 5 3" stroke-width="2"/><path d="M0 5 V-9 M-4 -5 L0 -9.500 L4 -5" stroke-width="2.400"/></svg><span>升起</span></div>
<div class="fb" style="left:480.0px"><i class="c1"></i><i class="c2"></i><i class="c3"></i><i class="c4"></i><svg style="left:16.500px;top:7px" width="24" height="26" viewBox="-12 -13 24 26" fill="none" stroke="currentColor" stroke-width="2" stroke-linecap="round" stroke-linejoin="round"><circle r="5.500" stroke-width="2.200"/><circle r="2" fill="currentColor" stroke="none"/><path d="M0 -11 L2.500 -8 H-2.500Z M0 11 L2.500 8 H-2.500Z M-11 0 L-8 -2.500 V2.500Z M11 0 L8 -2.500 V2.500Z" fill="currentColor" stroke="none"/></svg><span>开启摇杆</span></div>
<div class="fb" style="left:546.4px"><i class="c1"></i><i class="c2"></i><i class="c3"></i><i class="c4"></i><svg style="left:16.500px;top:7px" width="24" height="26" viewBox="-12 -13 24 26" fill="none" stroke="currentColor" stroke-width="2" stroke-linecap="round" stroke-linejoin="round"><circle r="5.500" stroke-width="2.200"/><path d="M-4 -4 L4 4" stroke-width="2.200"/><path d="M0 -11 L2.500 -8 H-2.500Z M0 11 L2.500 8 H-2.500Z M-11 0 L-8 -2.500 V2.500Z M11 0 L8 -2.500 V2.500Z" fill="currentColor" stroke="none"/></svg><span>关闭摇杆</span></div>
<div class="pb" style="left:790px;width:98px"><svg style="left:5px;top:5px" width="24" height="24" viewBox="0 0 24 24" fill="none" stroke="#fff" stroke-width="1.900" stroke-linejoin="round" stroke-linecap="round"><path d="M13 2.500 a8 8 0 1 1 -7 13"/><path d="M3 11 L15.500 6.500 L11.500 19 L9 13.500Z"/><path d="M9 13.500 L15.500 6.500"/></svg><b></b><span>指点飞行</span></div>
<div class="pb" style="left:905px;width:95px"><svg style="left:5px;top:5px" width="24" height="24" viewBox="0 0 24 24" fill="none" stroke="#fff" stroke-width="1.900" stroke-linejoin="round" stroke-linecap="round"><path d="M5 6 a9 9 0 1 1 -1 8"/><path d="M3 3.500 L5 7 L9 6"/><path d="M7 10 L17.500 9 L12 18.500 L11 13.500Z"/></svg><b></b><span>恢复飞行</span></div>
</div>
<div id="pc">
<div class="a" style="left:16px;top:40px;width:206px;height:140px;border-radius:9px 9px 0 0;background:#032050"></div>
<div class="a" style="left:336px;top:88px;width:90px;height:27px;border-radius:6px;background:#03214f"></div>
<div class="a" style="left:237px;top:139px;width:190px;height:40px;border-radius:6px 6px 0 0;background:#03214f"></div>
<div class="a" style="left:234px;top:88px;width:94px;height:27px;border-radius:3px;border:1px solid #5c82b8;background:#04224f"></div>
<svg style="left:0;top:0" width="437" height="169" viewBox="1473 775 437 169">
<path d="M1489.500 797 L1494 792.500 L1498.500 797" fill="none" stroke="#2f86d8" stroke-width="1.900"/><circle cx="1494" cy="799" r="1.100" fill="#2f86d8"/>
<g fill="#1fb6e8"><rect x="1830" y="790" width="13" height="9.500" rx="1.800"/><rect x="1834" y="786.800" width="5" height="2" rx=".5"/><rect x="1835.700" y="788" width="1.600" height="3"/></g><circle cx="1836.500" cy="794.800" r="2.300" fill="#042a5d"/><circle cx="1836.500" cy="794.800" r="1" fill="#1fb6e8"/>
<path d="M1889.500 792 L1894 796.500 L1898.500 792" fill="none" stroke="#fff" stroke-width="1.500"/>
<!-- gimbal dpad -->
<path d="M1578.5 819.5 A17 17 0 0 1 1602.5 819.5 Q1623.5 849.0 1653.0 870.0 A17 17 0 0 1 1653.0 894.0 Q1623.5 915.0 1602.5 944.5 A17 17 0 0 1 1578.5 944.5 Q1557.5 915.0 1528.0 894.0 A17 17 0 0 1 1528.0 870.0 Q1557.5 849.0 1578.5 819.5Z" fill="#07489b"/>
<circle cx="1590.500" cy="882" r="19.800" fill="#0b5ab8"/>
<g fill="#fff"><path d="M1581.400 831.800 L1590.500 823 L1599.600 831.800Z"/><path d="M1581.400 937 L1590.500 945.800 L1599.600 937Z"/><path d="M1538 872.600 L1528.300 881.300 L1538 890Z"/><path d="M1640.600 872.600 L1650.600 881.300 L1640.600 890Z"/></g>
<g fill="none" stroke="#fff" stroke-width="1.800" stroke-linecap="round"><path d="M1584.300 880.500 a6.500 6.500 0 0 1 11.500 -3"/><path d="M1596.700 884 a6.500 6.500 0 0 1 -11.500 3"/><path d="M1596.500 874.500 v3.300 h-3.300 M1584.500 890.500 v-3.300 h3.300"/></g>
<g font-family="Liberation Sans, sans-serif" font-size="11" fill="#6a98d6" text-anchor="middle"><text x="1590.500" y="852.800">上</text><text x="1548.800" y="884.700">左</text><text x="1630.400" y="884.700">右</text><text x="1590.500" y="925.500">下</text></g>
<!-- speed slider -->
<g font-family="Liberation Sans, sans-serif" font-size="8.500" font-weight="bold" fill="#a4b8d6"><text x="1496" y="829">90°/s</text><text x="1496.500" y="941.500">1°/s</text></g>
<rect x="1501.300" y="838" width="4" height="70" rx="2" fill="#0a2a5a"/>
<path d="M1500.500 840 h5.500 M1500.500 849.600 h5.500 M1500.500 859.200 h5.500 M1500.500 868.800 h5.500 M1500.500 878.400 h5.500 M1500.500 888 h5.500 M1500.500 897.600 h5.500" stroke="#3d6398" stroke-width="1.600"/><path d="M1500.500 904.800 h5.500" stroke="#3aa8d8" stroke-width="1.600"/>
<rect x="1496.500" y="910.500" width="14.500" height="7.500" rx="3.500" fill="#56bdea"/><rect x="1501" y="914" width="5.500" height="9.500" rx="2.500" fill="#3f9ade"/>
<!-- auto labels -->
<path d="M1638 836.400 h12.500 m-10 -2.500 l-2.800 2.500 l2.800 2.500 m7.500 -5 l2.800 2.500 l-2.800 2.500" stroke="#fff" stroke-width="1.400" fill="none"/>
<path d="M1644.900 927 v11.500 m-2.500 -9 l2.500 -2.800 l2.500 2.800 m-5 6.500 l2.500 2.800 l2.500 -2.800" stroke="#fff" stroke-width="1.400" fill="none"/>
<g font-family="Liberation Sans, sans-serif" font-size="9" font-weight="bold" fill="#a4b8d6" text-anchor="middle" letter-spacing="-.4"><text x="1668" y="834.500">自动</text><text x="1668" y="846.300">平移</text><text x="1668" y="929">自动</text><text x="1668" y="941.200">俯仰</text></g>
<!-- zoom slider -->
<defs><linearGradient id="zs" x1="1726" y1="0" x2="1799" y2="0" gradientUnits="userSpaceOnUse"><stop offset="0" stop-color="#8fe0ff"/><stop offset="1" stop-color="#34a8f0"/></linearGradient></defs>
<g fill="none" stroke="#49699b" stroke-width="1"><circle cx="1713" cy="827.100" r="4.800"/><path d="M1710.500 827.100 h5"/><circle cx="1892.700" cy="827.100" r="4.800"/><path d="M1890.200 827.100 h5 M1892.700 824.600 v5"/></g>
<rect x="1726.500" y="825.100" width="146" height="4" rx="2" fill="#082a5c"/>
<rect x="1726.500" y="825.100" width="72" height="4" rx="2" fill="url(#zs)"/><circle cx="1728.500" cy="827.100" r="2" fill="#fff"/>
<circle cx="1798.700" cy="827.100" r="4.600" fill="#2f7fd2"/><circle cx="1872.700" cy="827.300" r="2.600" fill="#fff"/>
<g font-family="Liberation Sans, sans-serif" font-size="12" fill="#8ba5c9" text-anchor="middle"><text x="1728.800" y="850">1x</text><text x="1799.200" y="850">28x</text><text x="1873.400" y="850">56x</text></g>
<text x="1717.600" y="881.500" font-family="Liberation Sans, sans-serif" font-size="12.500" font-weight="bold" fill="#fff" letter-spacing="-.5">广角</text>
<path d="M1780 875.500 L1784 879.500 L1788 875.500" fill="none" stroke="#cfd8e8" stroke-width="1.200"/>
<g fill="none" stroke="#8e9ab0" stroke-width="1.500"><rect x="1820" y="871.500" width="12.500" height="8.500"/><path d="M1826.300 868.500 v15"/>
<path d="M1848 872.500 v-3 h3 M1856 869.500 h3 v3 M1859 880.500 v3 h-3 M1851 883.500 h-3 v-3 M1852 873 h3 v2.500 h-3z M1851.500 880 q2 -3.500 4 0"/>
<rect x="1875" y="869.500" width="11.500" height="13.500" rx="1"/><path d="M1878 869.500 v13.500 M1880.500 873 h3.500 M1880.500 876.500 h3.500 M1880.500 880 h3.500" stroke-width="1.200"/></g>
<!-- bottom icon row -->
<g fill="none" stroke="#fff" stroke-width="1.800" stroke-linejoin="round">
<path d="M1719 926 q0 -2 2 -2 h2 l1 -1 h4.500 l1 1 h3.500 q2 0 2 2 v8 q0 2 -2 2 h-12 q-2 0 -2 -2z"/><circle cx="1727.500" cy="931" r="2.800"/>
<rect x="1757.500" y="924.500" width="11.500" height="12" rx="1.500"/><path d="M1769 928.500 l4.500 -2.500 v9 l-4.500 -2.500"/><rect x="1760" y="927.500" width="2" height="2" fill="#fff" stroke="none"/>
<circle cx="1803.900" cy="930.400" r="5.500"/><circle cx="1803.900" cy="930.400" r="1.800" fill="#fff"/><path d="M1803.900 921.500 v4 M1803.900 935.500 v4 M1795 930.400 h4 M1809 930.400 h4"/>
<g stroke="#2aa0f0" stroke-width="1.500"><circle cx="1841.900" cy="930.400" r="8.500"/><path d="M1836.500 928.500 v-3.500 h3.500 M1844 925 h3.500 v3.500 M1847.500 932.500 v3.500 h-3.500 M1840 936 h-3.500 v-3.500" stroke-width="1.300"/></g>
<g stroke-width="1.700"><path d="M1880.400 921.500 v18 M1871.400 930.400 h18 M1874.200 924.200 l12.400 12.400 M1886.600 924.200 l-12.400 12.400"/></g><circle cx="1880.400" cy="930.400" r="2.800" fill="#fff" stroke="#042a5d" stroke-width="1"/>
</g>
</svg>
<div class="a" style="left:29px;top:10.500px;font-size:12.500px;line-height:18px;font-weight:bold;white-space:nowrap;letter-spacing:-.4px">载荷控制</div>
<div class="a" style="left:374px;top:10.500px;font-size:12.500px;line-height:18px;font-weight:bold;white-space:nowrap;letter-spacing:-.6px">摄像头</div>

</div>

</body>
</html>
